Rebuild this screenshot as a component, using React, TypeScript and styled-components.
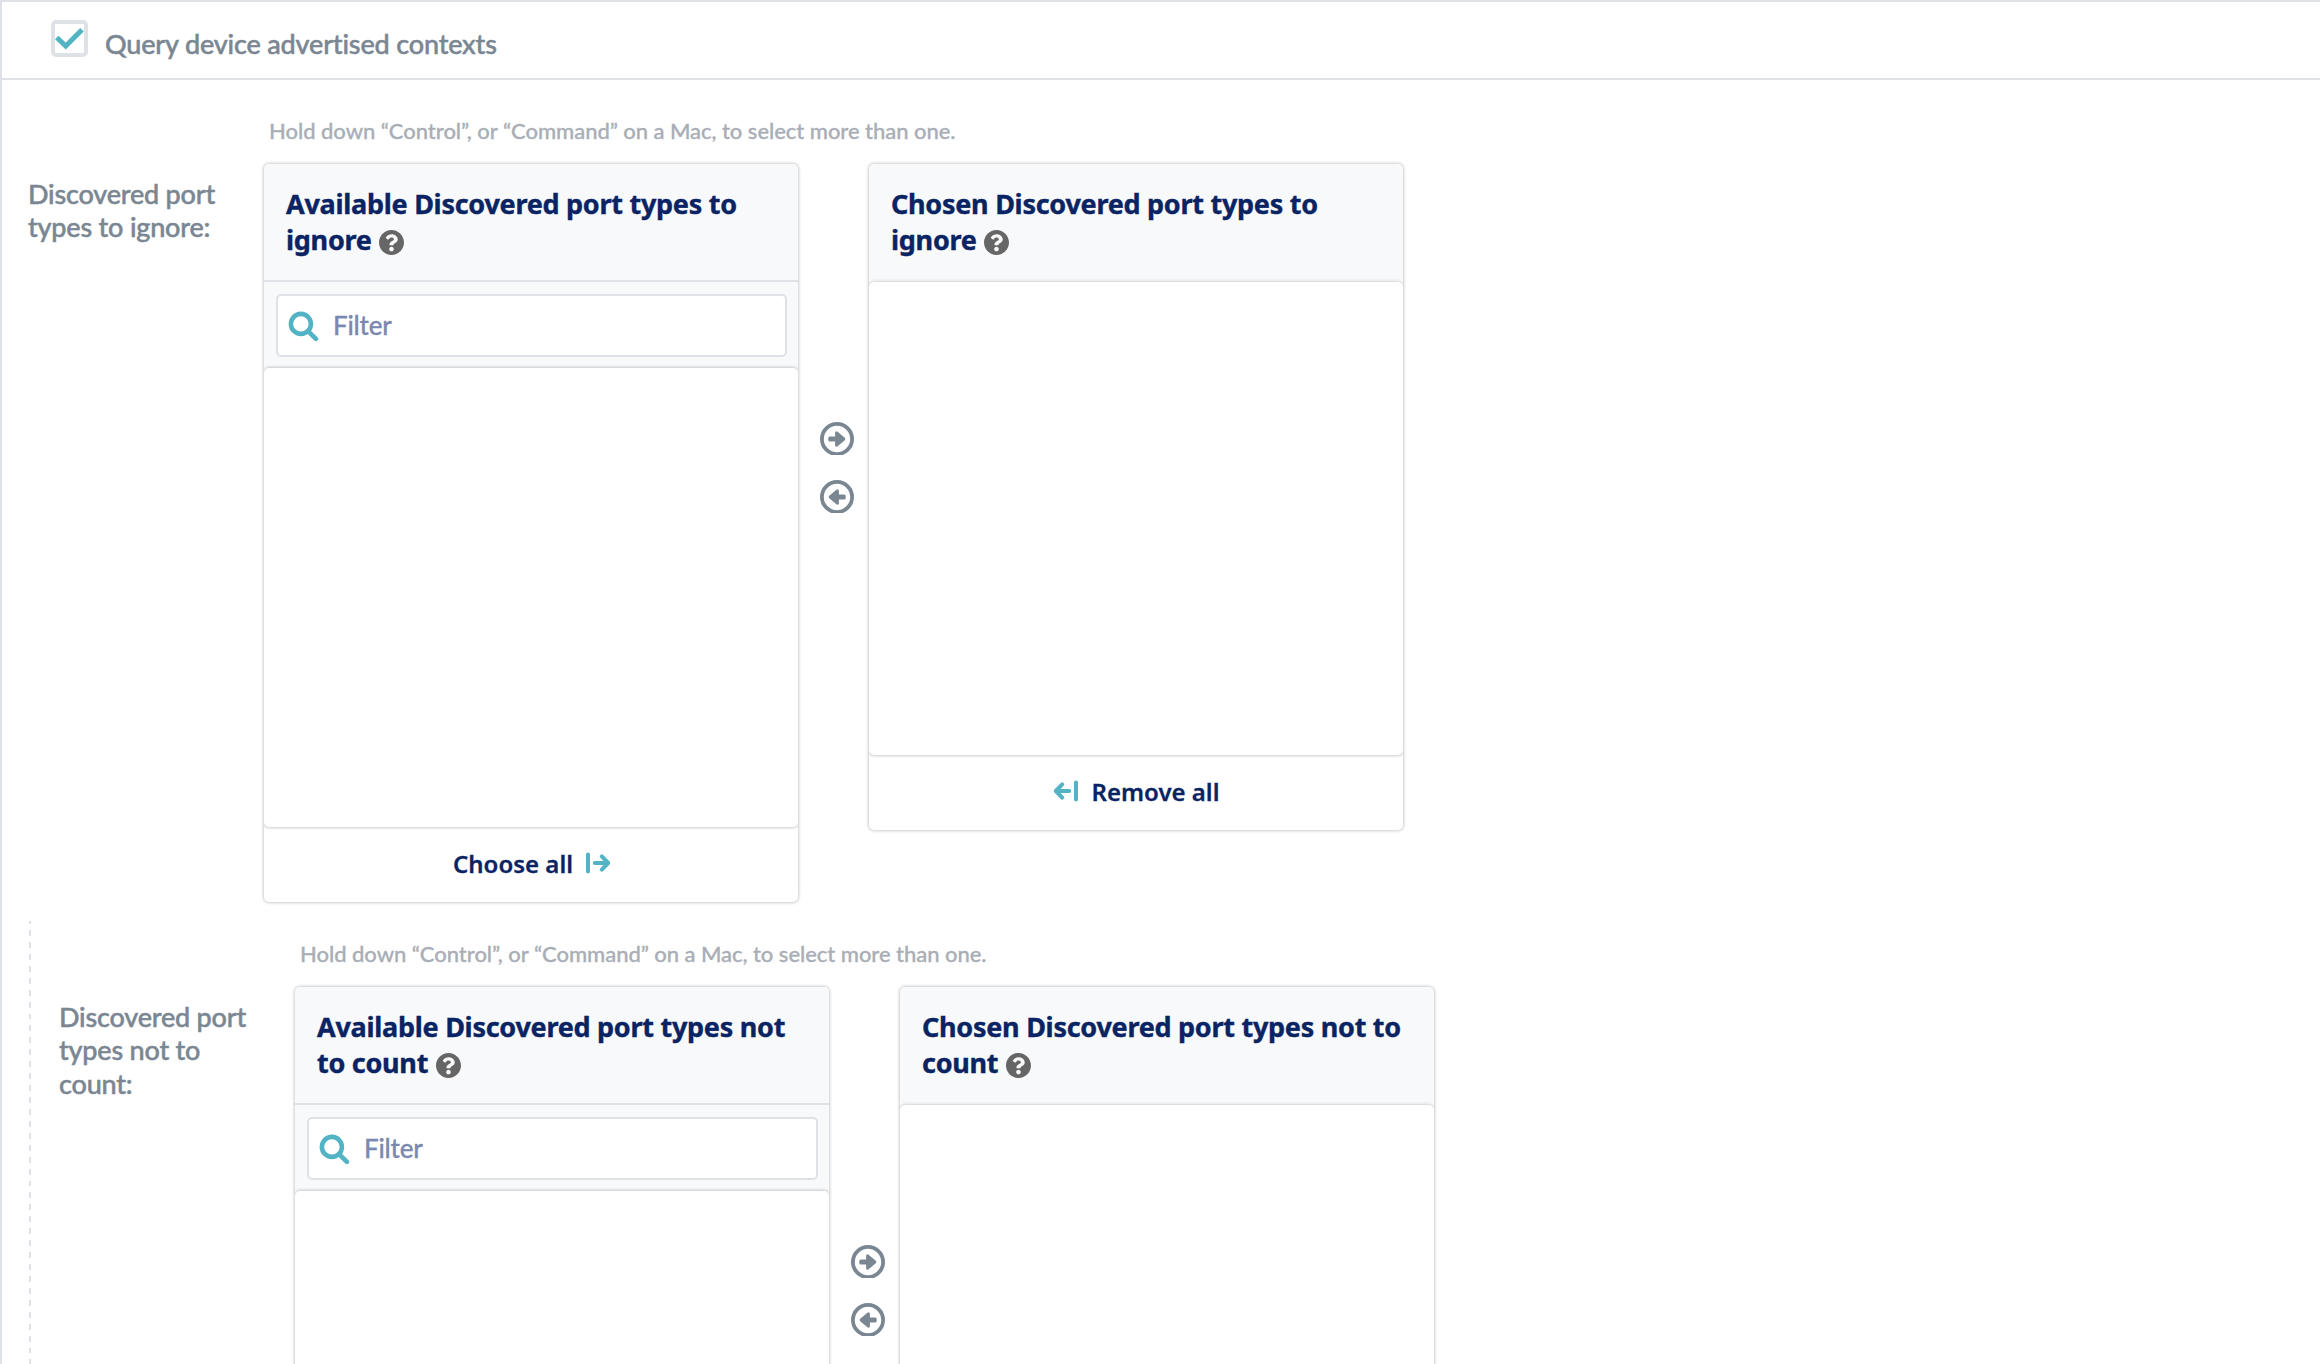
import React from "react";
import styled, { createGlobalStyle } from "styled-components";

const line = "#dee2e6";
const teal = "#51b3c3";
const navy = "#0a2463";
const slate = "#7a8793";

const GlobalStyle = createGlobalStyle`
  *, *::before, *::after { box-sizing: border-box; }
  body {
    margin: 0;
    background: #fff;
    overflow: hidden;
    font-family: Lato, "Open Sans", sans-serif;
    font-variant-ligatures: none;
  }
`;

const Page = styled.main`
  height: 1364px;
  overflow: hidden;
  border-top: 2px solid ${line};
  border-left: 2px solid ${line};
`;

const CheckRow = styled.label`
  display: flex;
  align-items: flex-start;
  height: 78px;
  padding: 18px 0 0 49px;
  border-bottom: 2px solid ${line};
`;

const CheckBox = styled.span`
  display: flex;
  width: 37px;
  height: 37px;
  border: 4px solid ${line};
  border-radius: 5px;

  svg {
    display: block;
    width: 29px;
    height: 29px;
  }
`;

const CheckText = styled.span`
  margin: 7px 0 0 17px;
  color: ${slate};
  font-size: 27px;
  font-weight: 500;
  line-height: 34px;
  letter-spacing: -0.17px;
  -webkit-text-stroke: 0.5px currentColor;
`;

const Section = styled.section<{ $nested?: boolean }>`
  display: flex;
  align-items: flex-start;
  margin: ${(p) => (p.$nested ? "19px 0 0 27px" : "0")};
  padding: ${(p) => (p.$nested ? "18px 0 0 30px" : "36px 0 0 26px")};
  background: ${(p) =>
    p.$nested
      ? `repeating-linear-gradient(to bottom, ${line} 0 3px, transparent 3px 9px, ${line} 9px 11.93px) 0 0 / 2px 100% no-repeat`
      : "none"};
`;

const FieldLabel = styled.div`
  flex: none;
  width: 204px;
  margin: 61px 32px 0 0;
  color: ${slate};
  font-size: 27px;
  font-weight: 500;
  line-height: 33.3px;
  letter-spacing: -0.2px;
  -webkit-text-stroke: 0.5px currentColor;
`;

const Field = styled.div`
  display: flex;
  flex-direction: column;
`;

const Hint = styled.p`
  margin: 1px 0 19px 5px;
  color: #a9aeb6;
  font-size: 22px;
  font-weight: 500;
  line-height: 28px;
  letter-spacing: -0.04px;
  -webkit-text-stroke: 0.3px currentColor;
`;

const Selector = styled.div`
  display: flex;
  align-items: flex-start;
`;

const Panel = styled.div`
  width: 534px;
  border-radius: 5px;
  background: #fff;
  box-shadow: 0 0 3px 1px rgba(0, 0, 0, 0.2);
`;

const PanelTitle = styled.h2<{ $ruled?: boolean }>`
  height: 118px;
  margin: 0;
  padding: 22px 22px 0;
  border-bottom: 2px solid ${(p) => (p.$ruled ? line : "transparent")};
  border-radius: 5px 5px 0 0;
  background: #f8f9fb;
  background-clip: padding-box;
  color: ${navy};
  font-family: "Noto Sans", sans-serif;
  font-size: 27px;
  font-weight: 700;
  line-height: 36.4px;
  letter-spacing: -0.27px;
  -webkit-text-stroke: 0.4px currentColor;

  svg {
    width: 25px;
    height: 25px;
    margin-left: 1px;
    vertical-align: -5px;
  }
`;

const FilterBar = styled.div`
  height: 86px;
  padding: 12px 11px 0 12px;
  background: #f8f9fb;
`;

const FilterInput = styled.div`
  display: flex;
  align-items: center;
  gap: 14px;
  height: 63px;
  padding: 0 0 2px 10px;
  border: 2px solid ${line};
  border-radius: 5px;
  background: #fff;
  color: #7b88b0;
  font-size: 26px;
  font-weight: 500;
  line-height: 34px;
  letter-spacing: -0.2px;
  -webkit-text-stroke: 0.3px currentColor;

  svg {
    width: 31px;
    height: 31px;
    margin-top: 4px;
  }
`;

/* Only the top and bottom shadow show; the sides belong to the panel. */
const Options = styled.div<{ $height: number }>`
  height: ${(p) => p.$height}px;
  border-radius: 5px;
  background: #fff;
  box-shadow: 0 0 3px 1px rgba(0, 0, 0, 0.2);
  clip-path: inset(-4px 0);
`;

const BulkAction = styled.button<{ $shift: number }>`
  display: flex;
  justify-content: center;
  gap: 13px;
  width: 100%;
  height: 75px;
  padding: 22px 0 0;
  border: 0;
  background: none;
  color: ${navy};
  font-family: "Noto Sans", sans-serif;
  font-size: 24px;
  font-weight: 600;
  line-height: 30px;
  -webkit-text-stroke: 0.3px currentColor;

  svg {
    width: 25px;
    height: 22px;
    margin: 3px ${(p) => p.$shift}px 0 0;
  }
`;

const Movers = styled.div`
  display: flex;
  flex-direction: column;
  gap: 25px;
  width: 71px;
  padding: 258px 0 0 22px;
`;

const MoveButton = styled.button<{ $back?: boolean }>`
  width: 34px;
  height: 33px;
  padding: 0;
  border: 0;
  background: none;
  overflow: hidden;

  svg {
    display: block;
    width: 34px;
    height: 34px;
    transform: ${(p) => (p.$back ? "scaleX(-1)" : "none")};
  }
`;

const CheckIcon = () => (
  <svg viewBox="0 0 29 29">
    <path d="M1.8 13.5 L10.7 22 L27 5.8" fill="none" stroke={teal} strokeWidth="5" />
  </svg>
);

const HelpIcon = () => (
  <svg viewBox="8 8 496 496">
    <path
      fill="#666"
      d="M504 256c0 136.997-111.043 248-248 248S8 392.997 8 256C8 119.083 119.043 8 256 8s248 111.083 248 248zM262.655 90c-54.497 0-89.255 22.957-116.549 63.758-3.536 5.286-2.353 12.415 2.715 16.258l34.699 26.31c5.205 3.947 12.621 3.008 16.665-2.122 17.864-22.658 30.113-35.797 57.303-35.797 20.429 0 45.698 13.148 45.698 32.958 0 14.976-12.363 22.667-32.534 33.976C247.128 238.528 216 254.941 216 296v4c0 6.627 5.373 12 12 12h56c6.627 0 12-5.373 12-12v-1.333c0-28.462 83.186-29.647 83.186-106.667 0-58.002-60.165-102-116.531-102zM256 338c-25.365 0-46 20.635-46 46 0 25.364 20.635 46 46 46s46-20.636 46-46c0-25.365-20.635-46-46-46z"
    />
  </svg>
);

const SearchIcon = () => (
  <svg viewBox="0 0 31 31" fill="none" stroke={teal} strokeWidth="4.6" strokeLinecap="round">
    <circle cx="12.9" cy="12.9" r="10" />
    <path d="M20.8 20.8 L27.9 27.9" />
  </svg>
);

const CircleArrow = () => (
  <svg viewBox="0 0 34 34">
    <circle cx="17" cy="17" r="15.1" fill="none" stroke={slate} strokeWidth="3.8" />
    <path
      d="M9.8 16 H16.6 V10.8 L23.8 17 L16.6 23.2 V18 H9.8 Z"
      fill={slate}
      stroke={slate}
      strokeWidth="3"
      strokeLinejoin="round"
    />
  </svg>
);

const ChooseIcon = () => (
  <svg viewBox="0 0 25 22" fill="none" stroke={teal} strokeWidth="4" strokeLinecap="round" strokeLinejoin="round">
    <path d="M2 2.4 V19.6 M8.8 11 H22 M15.8 4.4 L22.2 11 L15.8 17.6" />
  </svg>
);

const RemoveIcon = () => (
  <svg viewBox="0 0 25 22" fill="none" stroke={teal} strokeWidth="4" strokeLinecap="round" strokeLinejoin="round">
    <path d="M23 2.4 V19.6 M16.2 11 H3 M9.2 4.4 L2.8 11 L9.2 17.6" />
  </svg>
);

interface PortFieldProps {
  label: string;
  subject: string;
  nested?: boolean;
}

const PortField = ({ label, subject, nested }: PortFieldProps) => (
  <Section $nested={nested}>
    <FieldLabel>{label}</FieldLabel>
    <Field>
      <Hint>Hold down “Control”, or “Command” on a Mac, to select more than one.</Hint>
      <Selector>
        <Panel>
          <PanelTitle $ruled>
            Available {subject} <HelpIcon />
          </PanelTitle>
          <FilterBar>
            <FilterInput>
              <SearchIcon />
              Filter
            </FilterInput>
          </FilterBar>
          <Options $height={459} />
          <BulkAction $shift={-2}>
            Choose all
            <ChooseIcon />
          </BulkAction>
        </Panel>
        <Movers>
          <MoveButton>
            <CircleArrow />
          </MoveButton>
          <MoveButton $back>
            <CircleArrow />
          </MoveButton>
        </Movers>
        <Panel>
          <PanelTitle>
            Chosen {subject} <HelpIcon />
          </PanelTitle>
          <Options $height={473} />
          <BulkAction $shift={1}>
            <RemoveIcon />
            Remove all
          </BulkAction>
        </Panel>
      </Selector>
    </Field>
  </Section>
);

export default function App() {
  return (
    <>
      <GlobalStyle />
      <Page>
        <CheckRow>
          <CheckBox>
            <CheckIcon />
          </CheckBox>
          <CheckText>Query device advertised contexts</CheckText>
        </CheckRow>
        <PortField label="Discovered port types to ignore:" subject="Discovered port types to ignore" />
        <PortField nested label="Discovered port types not to count:" subject="Discovered port types not to count" />
      </Page>
    </>
  );
}
